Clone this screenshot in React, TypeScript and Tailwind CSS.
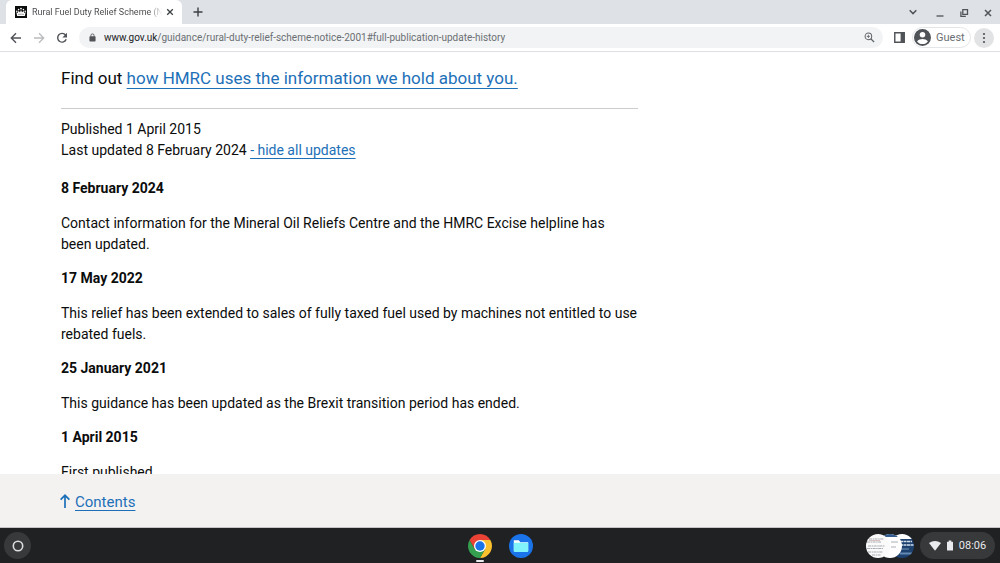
import type { ReactNode } from "react";

type Update = { date: string; note: string };

const updates: Update[] = [
  {
    date: "8 February 2024",
    note: "Contact information for the Mineral Oil Reliefs Centre and the HMRC Excise helpline has been updated.",
  },
  {
    date: "17 May 2022",
    note: "This relief has been extended to sales of fully taxed fuel used by machines not entitled to use rebated fuels.",
  },
  { date: "25 January 2021", note: "This guidance has been updated as the Brexit transition period has ended." },
  { date: "1 April 2015", note: "First published." },
];

function IconButton({ label, className = "", children }: { label: string; className?: string; children: ReactNode }) {
  return (
    <button type="button" aria-label={label} className={`flex shrink-0 items-center justify-center ${className}`}>
      {children}
    </button>
  );
}

function CrownIcon() {
  return (
    <svg viewBox="0 0 12 12" className="size-3 shrink-0" aria-hidden="true">
      <rect width="12" height="12" fill="#0b0c0c" />
      <g fill="#fff">
        <circle cx="6" cy="2.6" r="0.9" />
        <circle cx="3.6" cy="3.6" r="0.8" />
        <circle cx="8.4" cy="3.6" r="0.8" />
        <circle cx="1.8" cy="5.2" r="0.8" />
        <circle cx="10.2" cy="5.2" r="0.8" />
        <path d="M1.300 6l1.500 1 .7-2.300L5 6.600l1-2.800 1 2.800 1.500-1.900.7 2.300 1.500-1-.9 3.900H2.200z" />
      </g>
      <path d="M3 8.400Q6 7.900 9 8.400" stroke="#0b0c0c" strokeWidth=".4" fill="none" />
    </svg>
  );
}

function TabStrip() {
  return (
    <header className="flex h-6 shrink-0 items-center bg-[#dee1e6]">
      <div className="ml-[6px] flex h-6 w-[176px] items-center rounded-t-md bg-white pl-[9px]">
        <CrownIcon />
        <span className="ml-[5px] flex-1 overflow-hidden bg-linear-to-r from-[#45474a] from-90% to-transparent bg-clip-text pt-px text-[9px] whitespace-nowrap text-transparent">
          Rural Fuel Duty Relief Scheme (Notice 2001)
        </span>
        <IconButton label="Close tab" className="mr-1 size-4">
          <svg viewBox="0 0 8 8" className="size-2" stroke="#3c4043" strokeWidth="1.300" fill="none">
            <path d="M1.200 1.200l5.600 5.600M6.800 1.200L1.200 6.800" />
          </svg>
        </IconButton>
      </div>
      <IconButton label="New tab" className="ml-2 size-4">
        <svg viewBox="0 0 10 10" className="size-[10px]" stroke="#3c4043" strokeWidth="1.400">
          <path d="M5 .5v9M.5 5h9" />
        </svg>
      </IconButton>
      <div className="ml-auto flex items-center gap-2 pt-px pr-1">
        <IconButton label="Search tabs" className="mr-[3px] size-4">
          <svg viewBox="0 0 10 10" className="size-[10px]" stroke="#505357" strokeWidth="1.500" fill="none">
            <path d="M1.700 2.300L5 5.600l3.300-3.300" />
          </svg>
        </IconButton>
        <IconButton label="Minimise" className="size-4">
          <svg viewBox="0 0 10 10" className="size-[10px]" stroke="#505357" strokeWidth="1.300">
            <path d="M1.500 8h7" />
          </svg>
        </IconButton>
        <IconButton label="Restore" className="size-4">
          <svg viewBox="0 0 10 10" className="size-[10px]" stroke="#505357" strokeWidth="1.300" fill="none">
            <path d="M3.800 1.700h4.700v4.700H3.800zM1.900 3.500v4.900h4.900" />
          </svg>
        </IconButton>
        <IconButton label="Close" className="size-4">
          <svg viewBox="0 0 10 10" className="size-[10px]" stroke="#505357" strokeWidth="1.500">
            <path d="M2 2l6 6M8 2L2 8" />
          </svg>
        </IconButton>
      </div>
    </header>
  );
}

function Toolbar() {
  return (
    <nav aria-label="Browser" className="flex h-7 shrink-0 items-center border-b border-[#dddfe2] bg-white">
      <div className="ml-2 flex items-center gap-[7px]">
        <IconButton label="Back" className="size-4">
          <svg viewBox="0 0 12 12" className="size-3" stroke="#505357" strokeWidth="1.400" fill="none">
            <path d="M11 6H1.500M6 1.200L1.300 6 6 10.800" />
          </svg>
        </IconButton>
        <IconButton label="Forward" className="size-4">
          <svg viewBox="0 0 12 12" className="size-3" stroke="#babcbe" strokeWidth="1.300" fill="none">
            <path d="M1 6h9.500M6 1.200L10.700 6 6 10.800" />
          </svg>
        </IconButton>
        <IconButton label="Reload" className="size-4">
          <svg viewBox="0 0 12 12" className="size-3" fill="none">
            <path d="M9.600 3.100A4.400 4.400 0 1 0 10.200 7.300" stroke="#505357" strokeWidth="1.400" />
            <path d="M11 .8v4.600H6.400z" fill="#505357" />
          </svg>
        </IconButton>
      </div>
      <div className="ml-[9px] flex h-[21px] min-w-0 flex-1 items-center rounded-full bg-[#f1f3f4] pr-2 pl-[10px]">
        <svg viewBox="0 0 8 10" className="h-[9px] w-[7px] shrink-0" aria-hidden="true">
          <rect x=".5" y="3.600" width="7" height="6" rx=".8" fill="#505357" />
          <path d="M2.200 4V2.700a1.800 1.800 0 0 1 3.600 0V4" fill="none" stroke="#505357" strokeWidth="1" />
        </svg>
        <a
          href="https://www.gov.uk/guidance/rural-duty-relief-scheme-notice-2001#full-publication-update-history"
          aria-label="Page address"
          className="ml-2 flex-1 truncate text-[10px] text-[#6b6f73]"
        >
          <span className="text-[#202124]">www.gov.uk</span>
          /guidance/rural-duty-relief-scheme-notice-2001#full-publication-update-history
        </a>
        <IconButton label="Zoom" className="size-3">
          <svg viewBox="0 0 12 12" className="size-[11px]" stroke="#5f6368" fill="none" strokeWidth="1.100">
            <circle cx="4.800" cy="4.800" r="3.600" />
            <path d="M7.500 7.500l3.500 3.500" strokeWidth="1.500" />
            <path d="M3 4.800h3.600M4.800 3v3.600" strokeWidth=".9" />
          </svg>
        </IconButton>
      </div>
      <IconButton label="Side panel" className="ml-2 size-4">
        <svg viewBox="0 0 10 10" className="size-[11px]">
          <path d="M.7.7h8.600v8.600H.7z" fill="none" stroke="#505357" strokeWidth="1.300" />
          <path d="M6 .5h3.500v9H6z" fill="#505357" />
        </svg>
      </IconButton>
      <button
        type="button"
        className="ml-[5px] flex h-[21px] w-[59px] items-center gap-[5px] rounded-full border border-[#e4e5e7] pl-[1px] text-[11px] text-[#6b6f73]"
      >
        <svg viewBox="0 0 16 16" className="size-[17px] shrink-0" aria-hidden="true">
          <circle cx="8" cy="8" r="8" fill="#505357" />
          <circle cx="8" cy="5.400" r="2.600" fill="#fff" />
          <path d="M2.900 11.800C4 10 6.300 9.400 8 9.400s4 .6 5.100 2.400C12 13.400 10.100 14.200 8 14.200s-4-.8-5.100-2.400z" fill="#fff" />
        </svg>
        <span className="pt-px">Guest</span>
      </button>
      <IconButton label="Menu" className="mr-[6px] ml-[3px] size-5 rounded-full bg-[#e2e3e4]">
        <svg viewBox="0 0 4 12" className="h-3 w-1" fill="#505357">
          <circle cx="2" cy="2" r="1.100" />
          <circle cx="2" cy="6" r="1.100" />
          <circle cx="2" cy="10" r="1.100" />
        </svg>
      </IconButton>
    </nav>
  );
}

function Article() {
  return (
    <main className="min-h-0 flex-1 overflow-hidden px-[61px] pt-[14px] text-[14px] leading-[21px] text-[#0b0c0c]">
      <div className="max-w-[577px]">
        <p className="border-b border-[#cbcdce] pb-[17px] text-[17px] leading-[25px]">
          Find out{" "}
          <a href="#privacy" className="text-[#1d70b8] underline decoration-1 underline-offset-4">
            how HMRC uses the information we hold about you.
          </a>
        </p>
        <p className="pt-[10px]">Published 1 April 2015</p>
        <p>
          Last updated 8 February 2024{" "}
          <a href="#full-history" className="text-[#1d70b8] underline decoration-1 underline-offset-3">
            - hide all updates
          </a>
        </p>
        <dl className="pt-4">
          {updates.map((u) => (
            <div key={u.date} className="mb-3">
              <dt className="mb-[14px] leading-[22px] font-bold">{u.date}</dt>
              <dd>{u.note}</dd>
            </div>
          ))}
        </dl>
      </div>
    </main>
  );
}

function ContentsBar() {
  return (
    <div className="flex h-[54px] shrink-0 items-center border-b border-[#c5c5ca] bg-[#f3f2f1] px-[60px] text-[15px] text-[#1d70b8]">
      <a href="#contents" className="flex items-center gap-[5px]">
        <svg viewBox="0 0 10 14" className="h-[14px] w-[10px]" stroke="#1d70b8" strokeWidth="1.700" fill="none" aria-hidden="true">
          <path d="M5 14V1.500M.6 5.700L5 1.300l4.400 4.400" />
        </svg>
        <span className="pt-[3px] underline decoration-1 underline-offset-3">Contents</span>
      </a>
    </div>
  );
}

function ChromeLogo() {
  return (
    <svg viewBox="0 0 24 24" className="size-6" aria-hidden="true">
      <path d="M12 6h10.390A12 12 0 0 1 12 24l5.200-9z" fill="#fbc02d" />
      <path d="M1.610 6A12 12 0 0 0 12 24l5.200-9H6.800z" fill="#34a04f" />
      <path d="M1.610 6A12 12 0 0 1 22.390 6H12L6.800 15z" fill="#ea4335" />
      <circle cx="12" cy="12" r="6" fill="#fff" />
      <circle cx="12" cy="12" r="4.700" fill="#1a73e8" />
    </svg>
  );
}

function FilesLogo() {
  return (
    <svg viewBox="0 0 24 24" className="size-6" aria-hidden="true">
      <circle cx="12" cy="12" r="12" fill="#1a73e8" />
      <path d="M4.800 6.300h5l1.600 1.900h7.800V17H4.800z" fill="#fff" />
      <path d="M4.800 8.700h14.400v8.600a.8.8 0 0 1-.8.8H5.600a.8.8 0 0 1-.8-.8z" fill="#80f3fb" />
    </svg>
  );
}

function RecentCaptures() {
  return (
    <svg viewBox="0 0 48 24" className="h-6 w-12" aria-hidden="true">
      <defs>
        <clipPath id="capture-left"><circle cx="12" cy="12" r="12" /></clipPath>
        <clipPath id="capture-mid"><circle cx="24" cy="12" r="12" /></clipPath>
        <clipPath id="capture-right"><circle cx="36" cy="12" r="12" /></clipPath>
      </defs>
      <g clipPath="url(#capture-right)">
        <path d="M24 0h24v24H24z" fill="#1d4270" />
        <path d="M24 0h24v5H24z" fill="#fff" />
        <path d="M34 7.500h12M34 11h14" stroke="#d3dfeb" strokeWidth="1.400" strokeDasharray="3 .5" />
        <path d="M34 15h9" stroke="#7996b5" strokeWidth="1" />
        <path d="M34 19.500h12" stroke="#6488af" strokeWidth="2" />
      </g>
      <g clipPath="url(#capture-mid)">
        <path d="M12 0h24v24H12z" fill="#fff" />
        <path d="M12 0h24v3H12z" fill="#315c8d" />
        <path d="M25 8h7M25 13h5" stroke="#969ba1" strokeWidth=".8" />
      </g>
      <g clipPath="url(#capture-left)">
        <path d="M0 0h24v24H0z" fill="#fafafa" />
        <path d="M3 5h15M1 8h14M2 12h17M1 14.500h16M2 18h15M6 21h9" stroke="#9da2aa" strokeWidth=".9" strokeDasharray="3 .6 1.500 .5" />
        <path d="M3 6.500h11" stroke="#c39a9c" strokeWidth=".6" />
      </g>
    </svg>
  );
}

function Shelf() {
  return (
    <footer className="grid h-[35px] shrink-0 grid-cols-[1fr_auto_1fr] items-center bg-[#202123] pr-[5px] pl-1">
      <IconButton label="Launcher" className="size-[27px] rounded-full bg-[#38393a]">
        <svg viewBox="0 0 12 12" className="size-3" aria-hidden="true">
          <circle cx="6" cy="6" r="4.700" fill="none" stroke="#dcdde0" strokeWidth="1.600" />
        </svg>
      </IconButton>
      <div className="flex gap-[17px] pl-[2px]">
        <IconButton label="Chrome" className="relative size-6">
          <ChromeLogo />
          <span className="absolute -bottom-1 left-2 h-[2px] w-2 rounded-full bg-[#e8eaed]" />
        </IconButton>
        <IconButton label="Files" className="size-6">
          <FilesLogo />
        </IconButton>
      </div>
      <div className="flex items-center justify-end gap-[6px]">
        <IconButton label="Recent screen captures">
          <RecentCaptures />
        </IconButton>
        <button
          type="button"
          className="flex h-[27px] w-[75px] items-center justify-center rounded-full bg-[#38393a] text-[11px] text-[#e8eaed]"
        >
          <svg viewBox="0 0 12 10" className="h-[10px] w-3" fill="#e8eaed" aria-hidden="true">
            <path d="M0 2Q6-2 12 2L6 9.800z" />
          </svg>
          <svg viewBox="0 0 6 10" className="mr-[6px] ml-[6px] h-[11px] w-[6px]" fill="#e8eaed" aria-hidden="true">
            <path d="M1.700 0h2.600v1.200h1.200q.5 0 .5.500v7.800q0 .5-.5.500h-5q-.5 0-.5-.5V1.700q0-.5.5-.5h1.200z" />
          </svg>
          <span className="pt-px">08:06</span>
        </button>
      </div>
    </footer>
  );
}

export default function App() {
  return (
    <div className="flex h-screen flex-col overflow-hidden bg-white font-['Roboto',sans-serif]">
      <TabStrip />
      <Toolbar />
      <div className="flex min-h-0 flex-1 flex-col">
        <Article />
        <ContentsBar />
      </div>
      <Shelf />
    </div>
  );
}
